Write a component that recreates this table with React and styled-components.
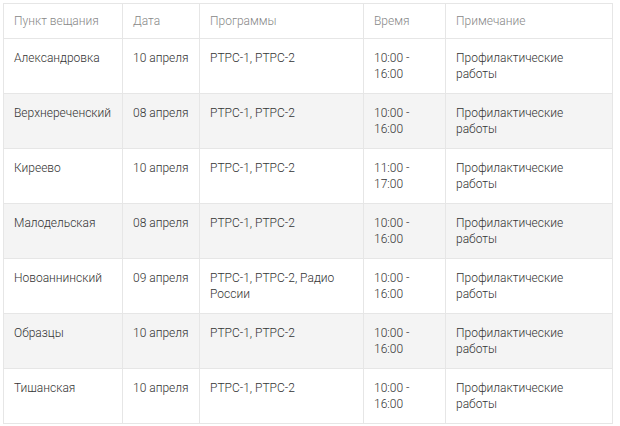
import styled, { createGlobalStyle } from "styled-components";

const GlobalStyle = createGlobalStyle`
  body {
    margin: 3px;
    background: #fff;
    font-family: Roboto, "Liberation Sans", sans-serif;
  }
`;

const Table = styled.table`
  border-collapse: collapse;
  width: 610px;
  table-layout: fixed;
  font-size: 12px;
  font-weight: 300;
  line-height: 16px;
  color: #333;
  border: 1px solid #e6e6e6;
`;

const HeadCell = styled.th`
  text-align: left;
  font-weight: 300;
  color: #888;
  padding: 9px 10px;
  height: 16px;
  border: 1px solid #e6e6e6;
  vertical-align: top;
`;

const Row = styled.tr`
  background: ${(p) => (p.$striped ? "#f4f4f4" : "#fff")};
`;

const Cell = styled.td`
  padding: 11px 10px;
  height: 32px;
  border: 1px solid #e6e6e6;
  vertical-align: top;
`;

const columns = [
  { title: "Пункт вещания", width: 119 },
  { title: "Дата", width: 77 },
  { title: "Программы", width: 164 },
  { title: "Время", width: 82 },
  { title: "Примечание", width: 167 },
];

const rows = [
  ["Александровка", "10 апреля", "РТРС-1, РТРС-2", "10:00 - 16:00"],
  ["Верхнереченский", "08 апреля", "РТРС-1, РТРС-2", "10:00 - 16:00"],
  ["Киреево", "10 апреля", "РТРС-1, РТРС-2", "11:00 - 17:00"],
  ["Малодельская", "08 апреля", "РТРС-1, РТРС-2", "10:00 - 16:00"],
  ["Новоаннинский", "09 апреля", "РТРС-1, РТРС-2, Радио России", "10:00 - 16:00"],
  ["Образцы", "10 апреля", "РТРС-1, РТРС-2", "10:00 - 16:00"],
  ["Тишанская", "10 апреля", "РТРС-1, РТРС-2", "10:00 - 16:00"],
];

const App = () => {
  return (
    <>
      <GlobalStyle />
      <Table>
        <colgroup>
          {columns.map((c) => (
            <col key={c.title} style={{ width: c.width }} />
          ))}
        </colgroup>
        <thead>
          <tr>
            {columns.map((c) => (
              <HeadCell key={c.title}>{c.title}</HeadCell>
            ))}
          </tr>
        </thead>
        <tbody>
          {rows.map((r, i) => (
            <Row key={r[0]} $striped={i % 2 === 1}>
              <Cell>{r[0]}</Cell>
              <Cell>{r[1]}</Cell>
              <Cell>{r[2]}</Cell>
              <Cell>{r[3]}</Cell>
              <Cell>Профилактические работы</Cell>
            </Row>
          ))}
        </tbody>
      </Table>
    </>
  );
};

export default App;
